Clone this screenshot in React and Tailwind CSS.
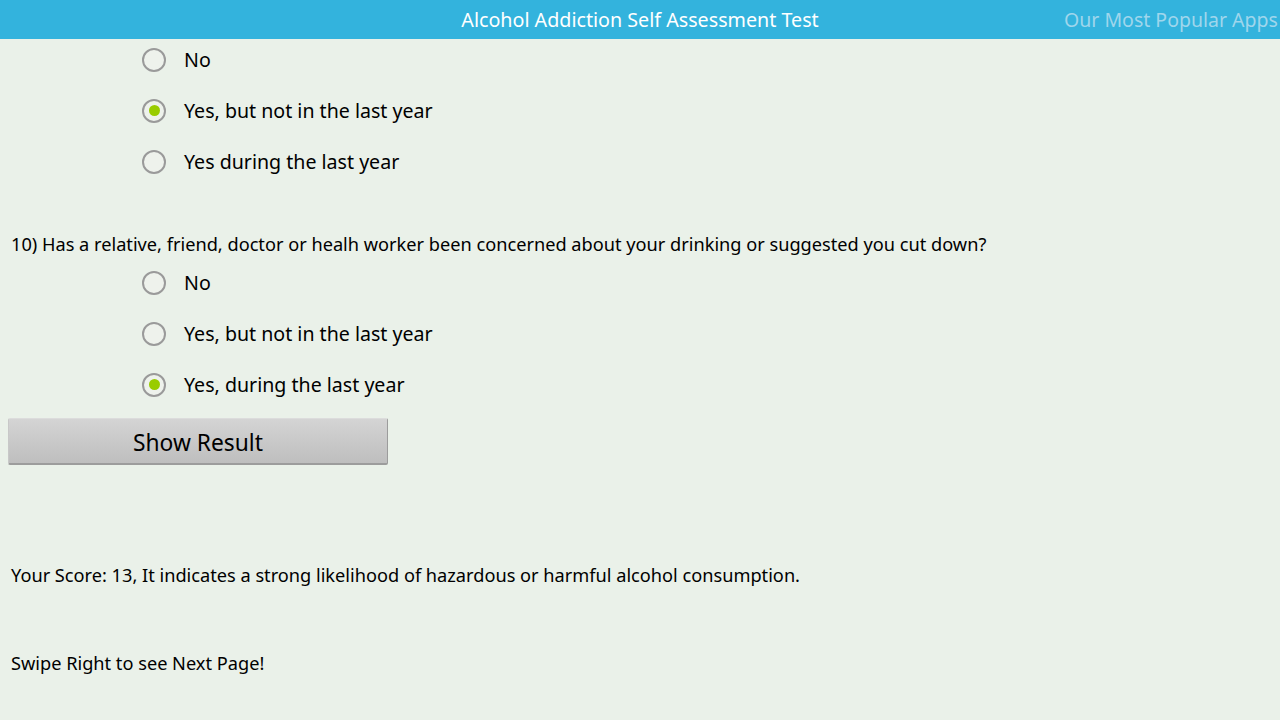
import React from 'react';

function Radio({ checked }) {
  return (
    <span className="w-[24px] h-[24px] rounded-full border-2 border-[#9a9a9a] bg-[#eef2ec] flex items-center justify-center shrink-0">
      {checked && <span className="w-[11px] h-[11px] rounded-full bg-[#99cc00]" />}
    </span>
  );
}

function Option({ label, checked }) {
  return (
    <div className="h-[51px] flex items-center pl-[142px] gap-[18px]">
      <Radio checked={checked} />
      <span className="text-[19.6px] text-black">{label}</span>
    </div>
  );
}

export default function App() {
  return (
    <div className="w-[1280px] h-[720px] overflow-hidden bg-[#eaf1e9] flex flex-col [font-family:'Noto_Sans',sans-serif]">
      <header className="relative z-10 h-[39px] shrink-0 bg-[#33b3dd] flex items-center">
        <h1 className="absolute inset-x-0 text-center text-[19.7px] text-white">Alcohol Addiction Self Assessment Test</h1>
        <span className="absolute left-[1064px] whitespace-nowrap text-[19.5px] text-[#9fd6ec]">Our Most Popular Apps</span>
      </header>

      <main className="-mt-[5px] flex flex-col">
        <Option label="No" />
        <Option label="Yes, but not in the last year" checked />
        <Option label="Yes during the last year" />

        <p className="mt-[45px] px-[11px] text-[18.2px] leading-[24px] text-black">
          10) Has a relative, friend, doctor or healh worker been concerned about your drinking or suggested you cut down?
        </p>
        <div className="mt-[1px] flex flex-col">
          <Option label="No" />
          <Option label="Yes, but not in the last year" />
          <Option label="Yes, during the last year" checked />
        </div>

        <button className="ml-[8px] mt-[8px] w-[380px] h-[47px] pt-[5px] rounded-[2px] bg-gradient-to-b from-[#d4d4d4] to-[#bebebe] border-t border-l border-t-[#dcdcdc] border-l-[#c8c8c8] border-b-2 border-r border-b-[#9c9c9c] border-r-[#9c9c9c] text-[22.8px] text-black">
          Show Result
        </button>

        <p className="mt-[98px] px-[11px] text-[18.2px] leading-[24px] text-black">
          Your Score: 13, It indicates a strong likelihood of hazardous or harmful alcohol consumption.
        </p>
        <p className="mt-[64px] px-[11px] text-[18.2px] leading-[24px] text-black">
          Swipe Right to see Next Page!
        </p>
      </main>
    </div>
  );
}
